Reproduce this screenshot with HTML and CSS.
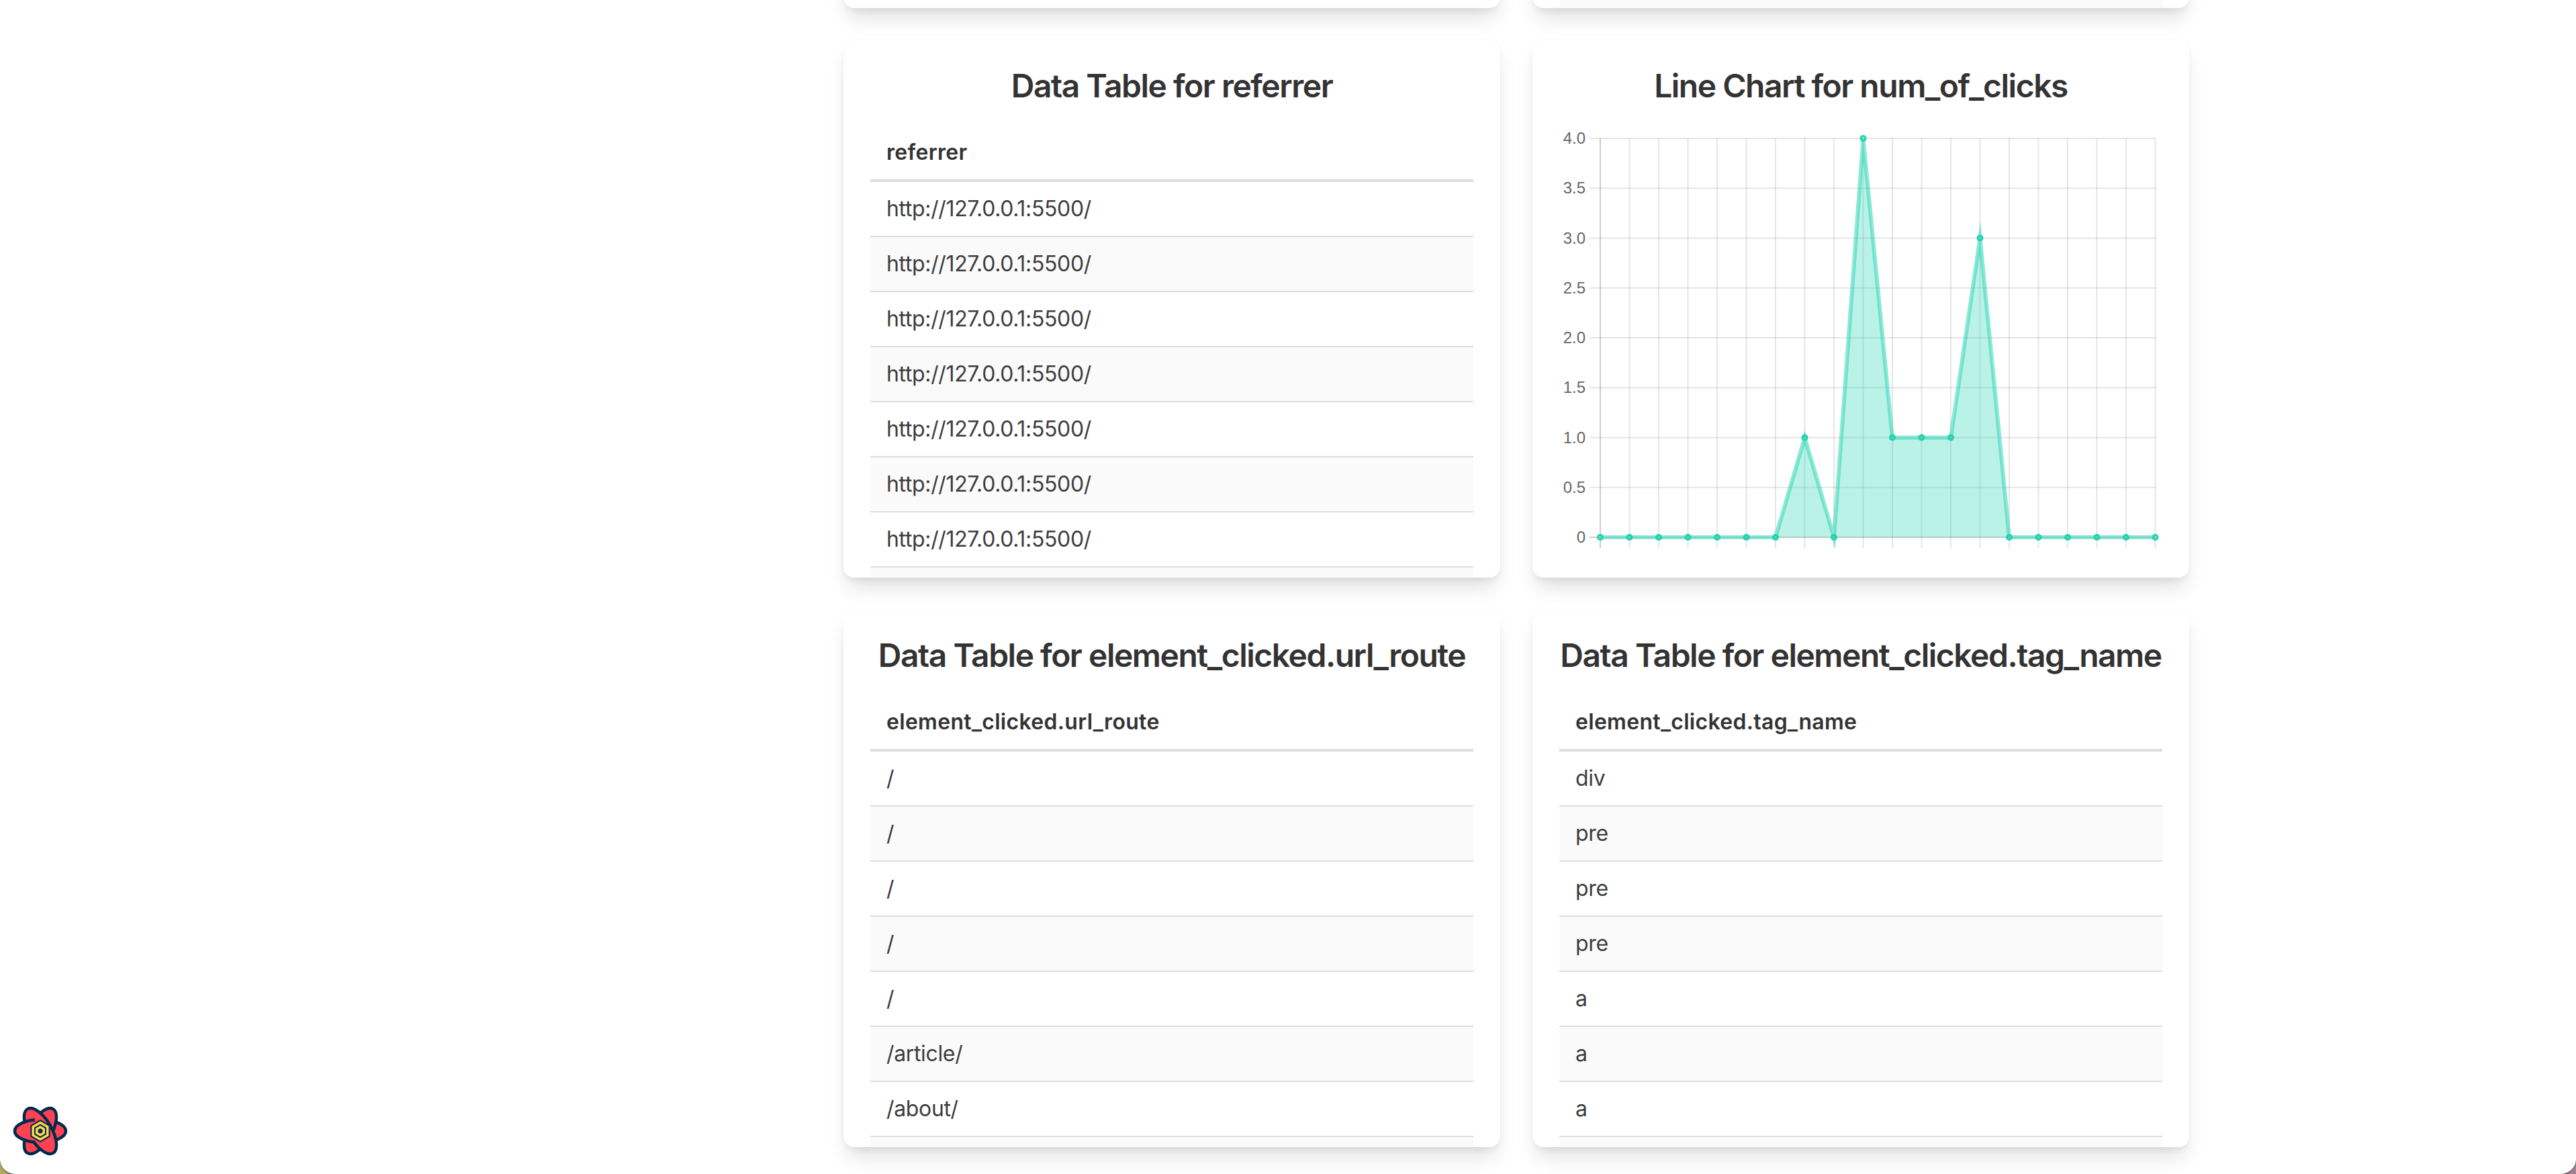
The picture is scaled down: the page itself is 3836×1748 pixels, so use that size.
FILE: index.html
```html
<!DOCTYPE html>
<html lang="en">
<head>
    <meta charset="UTF-8">
    <meta name="viewport" content="width=device-width, initial-scale=1.0">
    <title>Dashboard</title>
    <link rel="stylesheet" href="styles.css">
</head>
<body>
    <div class="page">
        <main class="grid">
            <div class="card card-cut"></div>
            <div class="card card-cut"><div class="stripe"></div></div>

            <section class="card">
                <h2>Data Table for referrer</h2>
                <table>
                    <thead><tr><th>referrer</th></tr></thead>
                    <tbody>
                        <tr><td>http://127.0.0.1:5500/</td></tr>
                        <tr><td>http://127.0.0.1:5500/</td></tr>
                        <tr><td>http://127.0.0.1:5500/</td></tr>
                        <tr><td>http://127.0.0.1:5500/</td></tr>
                        <tr><td>http://127.0.0.1:5500/</td></tr>
                        <tr><td>http://127.0.0.1:5500/</td></tr>
                        <tr><td>http://127.0.0.1:5500/</td></tr>
                        <tr><td>&nbsp;</td></tr>
                    </tbody>
                </table>
            </section>

            <section class="card">
                <h2>Line Chart for num_of_clicks</h2>
                <svg class="chart" width="898" height="632" viewBox="0 0 898 632">
                    <g transform="translate(61 19)">
                        <path class="grid-line" d="M-16 0H827M-16 74.25H827M-16 148.5H827M-16 222.75H827M-16 297H827M-16 371.25H827M-16 445.5H827M-16 519.75H827"/>
                        <path class="grid-line" d="M43.5 0V610M87 0V610M130.5 0V610M174 0V610M217.5 0V610M261 0V610M304.5 0V610M348 0V610M391.5 0V610M435 0V610M478.5 0V610M522 0V610M565.5 0V610M609 0V610M652.5 0V610M696 0V610M739.5 0V610M783 0V610M826.5 0V610"/>
                        <path class="axis-line" d="M0 0V610M-16 594H827"/>

                        <polygon class="area" points="0,594 261,594 304.5,445.5 348,594 391.5,0 435,445.5 478.5,445.5 522,445.5 565.5,148.5 609,594 826.5,594"/>
                        <polyline class="line" points="0,594 43.5,594 87,594 130.5,594 174,594 217.5,594 261,594 304.5,445.5 348,594 391.5,0 435,445.5 478.5,445.5 522,445.5 565.5,148.5 609,594 652.5,594 696,594 739.5,594 783,594 826.5,594"/>

                        <g class="points">
                            <circle cx="0" cy="594" r="3.5"/><circle cx="43.5" cy="594" r="3.5"/>
                            <circle cx="87" cy="594" r="3.5"/><circle cx="130.5" cy="594" r="3.5"/>
                            <circle cx="174" cy="594" r="3.5"/><circle cx="217.5" cy="594" r="3.5"/>
                            <circle cx="261" cy="594" r="3.5"/><circle cx="304.5" cy="445.5" r="3.5"/>
                            <circle cx="348" cy="594" r="3.5"/><circle cx="391.5" cy="0" r="3.5"/>
                            <circle cx="435" cy="445.5" r="3.5"/><circle cx="478.5" cy="445.5" r="3.5"/>
                            <circle cx="522" cy="445.5" r="3.5"/><circle cx="565.5" cy="148.5" r="3.5"/>
                            <circle cx="609" cy="594" r="3.5"/><circle cx="652.5" cy="594" r="3.5"/>
                            <circle cx="696" cy="594" r="3.5"/><circle cx="739.5" cy="594" r="3.5"/>
                            <circle cx="783" cy="594" r="3.5"/><circle cx="826.5" cy="594" r="3.5"/>
                        </g>

                        <g class="tick-label">
                            <text x="-22" y="8">4.0</text>
                            <text x="-22" y="82">3.5</text>
                            <text x="-22" y="157">3.0</text>
                            <text x="-22" y="231">2.5</text>
                            <text x="-22" y="305">2.0</text>
                            <text x="-22" y="379">1.5</text>
                            <text x="-22" y="454">1.0</text>
                            <text x="-22" y="528">0.5</text>
                            <text x="-22" y="602">0</text>
                        </g>
                    </g>
                </svg>
            </section>

            <section class="card">
                <h2>Data Table for element_clicked.url_route</h2>
                <table>
                    <thead><tr><th>element_clicked.url_route</th></tr></thead>
                    <tbody>
                        <tr><td>/</td></tr>
                        <tr><td>/</td></tr>
                        <tr><td>/</td></tr>
                        <tr><td>/</td></tr>
                        <tr><td>/</td></tr>
                        <tr><td>/article/</td></tr>
                        <tr><td>/about/</td></tr>
                        <tr><td>&nbsp;</td></tr>
                    </tbody>
                </table>
            </section>

            <section class="card">
                <h2>Data Table for element_clicked.tag_name</h2>
                <table>
                    <thead><tr><th>element_clicked.tag_name</th></tr></thead>
                    <tbody>
                        <tr><td>div</td></tr>
                        <tr><td>pre</td></tr>
                        <tr><td>pre</td></tr>
                        <tr><td>pre</td></tr>
                        <tr><td>a</td></tr>
                        <tr><td>a</td></tr>
                        <tr><td>a</td></tr>
                        <tr><td>&nbsp;</td></tr>
                    </tbody>
                </table>
            </section>
        </main>

        <!-- query devtools toggle -->
        <button class="devtools" type="button" aria-label="Open devtools">
            <svg width="84" height="76" viewBox="-42 -38 84 76">
                <defs>
                    <clipPath id="leftHalf"><rect x="-42" y="-38" width="34" height="76"/></clipPath>
                </defs>
                <g class="petal">
                    <ellipse rx="38" ry="17"/>
                    <ellipse rx="38" ry="17" transform="rotate(120)"/>
                    <ellipse rx="38" ry="17" transform="rotate(60)"/>
                    <ellipse rx="38" ry="17" clip-path="url(#leftHalf)"/>
                </g>
                <polygon class="hex-back" points="0,-17 14.7,-8.5 14.7,8.5 0,17 -14.7,8.5 -14.7,-8.5"/>
                <polygon class="hex-ring" points="0,-12.5 10.8,-6.25 10.8,6.25 0,12.5 -10.8,6.25 -10.8,-6.25"/>
                <polygon class="hex-ring" points="0,-6 5.2,-3 5.2,3 0,6 -5.2,3 -5.2,-3"/>
            </svg>
        </button>
    </div>
</body>
</html>
```

FILE: styles.css
```css
* {
    box-sizing: border-box;
}

html, body {
    margin: 0;
    height: 1748px;
    overflow: hidden;
}

/* wallpaper showing through the window corners */
body {
    background: linear-gradient(90deg, #b4a95a 0%, #b4a95a 50%, #a57f93 50%, #a57f93 100%);
    font-family: Inter, "Liberation Sans", sans-serif;
    color: #333;
}

.page {
    position: relative;
    height: 1748px;
    background-color: #fff;
    border-radius: 0 0 22px 22px;
    box-shadow: 0 1px 1px #222;
    overflow: hidden;
}

.grid {
    display: grid;
    grid-template-columns: 978px 978px;
    grid-template-rows: 12px 800px 800px;
    gap: 48px;
    margin-left: 1256px;
}

.card {
    background-color: #fff;
    border-radius: 16px;
    padding: 40px;
    overflow: hidden;
    box-shadow: 0 20px 30px -6px rgba(0, 0, 0, 0.12), 0 8px 12px -4px rgba(0, 0, 0, 0.06), 0 0 6px rgba(0, 0, 0, 0.03);
}

/* cards scrolled off the top of the window */
.card-cut {
    display: flex;
    align-items: flex-end;
    height: 112px;
    margin-top: -100px;
    padding: 0 40px;
}

.stripe {
    flex: 1;
    height: 112px;
    background-color: #fafafa;
}

h2 {
    margin: 0 0 31px;
    font-size: 48px;
    line-height: 56px;
    font-weight: 600;
    letter-spacing: -1.5px;
    text-align: center;
    white-space: nowrap;
    color: #333;
}

table {
    width: 100%;
    border-collapse: collapse;
    font-size: 32px;
    line-height: 32px;
}

th, td {
    padding: 24px;
    text-align: left;
}

th {
    font-weight: 600;
    letter-spacing: 0.3px;
    border-bottom: 4px solid #ddd;
}

td {
    letter-spacing: -0.35px;
    color: #3d3d3d;
    border-bottom: 2px solid #ddd;
}

tbody tr:nth-child(even) {
    background-color: #fafafa;
}

.chart {
    display: block;
}

.grid-line {
    fill: none;
    stroke: rgba(0, 0, 0, 0.1);
    stroke-width: 2;
}

.axis-line {
    fill: none;
    stroke: rgba(0, 0, 0, 0.2);
    stroke-width: 2;
}

.area {
    fill: rgba(30, 211, 175, 0.3);
}

.line {
    fill: none;
    stroke: rgba(30, 211, 175, 0.5);
    stroke-width: 6;
    stroke-linejoin: miter;
    stroke-miterlimit: 10;
}

.points circle {
    fill: rgba(30, 211, 175, 0.3);
    stroke: #1ed3af;
    stroke-width: 3;
}

.tick-label text {
    font-family: "Liberation Sans", Arial, sans-serif;
    font-size: 24px;
    fill: #666;
    text-anchor: end;
}

.devtools {
    position: absolute;
    left: 18px;
    bottom: 26px;
    display: flex;
    padding: 0;
    border: none;
    background: none;
    cursor: pointer;
}

.petal ellipse {
    fill: #ff4154;
    stroke: #002b4d;
    stroke-width: 4.5;
}

.hex-back {
    fill: #002b4d;
}

.hex-ring {
    fill: none;
    stroke: #ffd94c;
    stroke-width: 3.5;
}
```
